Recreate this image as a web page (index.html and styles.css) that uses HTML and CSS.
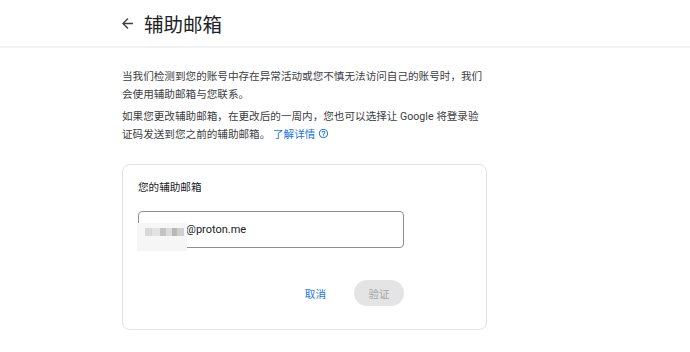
FILE: index.html
```html
<!DOCTYPE html>
<html lang="zh-CN">
<head>
    <meta charset="UTF-8">
    <meta name="viewport" content="width=device-width, initial-scale=1.0">
    <title>辅助邮箱</title>
    <link rel="stylesheet" href="styles.css">
</head>
<body>
    <div class="header">
        <a class="back" href="#">
            <svg viewBox="4 4 16 16" width="11" height="11"><path d="M20 11H7.83l5.59-5.59L12 4l-8 8 8 8 1.41-1.41L7.83 13H20v-2z" fill="#3c4043"/></svg>
        </a>
        <h1>辅助邮箱</h1>
    </div>

    <div class="main">
        <p>当我们检测到您的账号中存在异常活动或您不慎无法访问自己的账号时，我们会使用辅助邮箱与您联系。</p>
        <p>如果您更改辅助邮箱，在更改后的一周内，您也可以选择让 Google 将登录验证码发送到您之前的辅助邮箱。 <a class="link" href="#">了解详情</a><svg class="help" viewBox="0 0 24 24" width="11" height="11"><path fill="#1a73e8" d="M11 18h2v-2h-2v2zm1-16C6.48 2 2 6.48 2 12s4.48 10 10 10 10-4.48 10-10S17.52 2 12 2zm0 18c-4.41 0-8-3.590-8-8s3.59-8 8-8 8 3.59 8 8-3.59 8-8 8zm0-14c-2.21 0-4 1.79-4 4h2c0-1.1.9-2 2-2s2 .9 2 2c0 2-3 1.75-3 5h2c0-2.25 3-2.5 3-5 0-2.21-1.79-4-4-4z"/></svg></p>

        <div class="card">
            <div class="label">您的辅助邮箱</div>
            <div class="form">
                <div class="field">
                    @proton.me
                    <div class="blur">
                        <span class="px p1"></span><span class="px p2"></span><span class="px p3"></span><span class="px p4"></span><span class="px p5"></span><span class="px p6"></span>
                    </div>
                </div>
                <div class="actions">
                    <button class="cancel">取消</button>
                    <button class="verify" disabled>验证</button>
                </div>
            </div>
        </div>
    </div>
</body>
</html>
```

FILE: styles.css
```css
body {
    margin: 0;
    font-family: Roboto, "Noto Sans CJK SC", sans-serif;
    color: #3c4043;
    background-color: #ffffff;
}
.header {
    height: 46px;
    border-bottom: 2px solid #f1f1f1;
    display: flex;
    align-items: center;
    padding-left: 122px;
    gap: 11px;
}
.back {
    display: flex;
}
h1 {
    margin: 0;
    font-size: 19.5px;
    font-weight: 400;
    color: #202124;
}
.main {
    width: 365px;
    padding: 20px 0 0 122px;
}
p {
    margin: 0 0 4px;
    font-size: 10.6px;
    line-height: 18px;
}
.link {
    color: #1a73e8;
    text-decoration: none;
}
.help {
    vertical-align: -1px;
    margin-left: 3px;
}
.card {
    margin-top: 20px;
    border: 1px solid #e3e3e3;
    border-radius: 8px;
    padding: 14px 15px 23px;
}
.label {
    font-size: 10.6px;
    line-height: 18px;
    color: #202124;
}
.form {
    width: 266px;
    margin-top: 14px;
}
.field {
    position: relative;
    height: 35px;
    border: 1px solid #8f8f8f;
    border-radius: 4px;
    padding-left: 47px;
    font-size: 11px;
    line-height: 35px;
    color: #202124;
}
.blur {
    position: absolute;
    left: -2px;
    top: 11px;
    width: 50px;
    height: 28px;
    background-color: #f6f6f6;
    display: flex;
    align-items: flex-start;
    padding: 5px 0 0 8px;
    box-sizing: border-box;
}
.px {
    height: 8px;
    background-color: #d0d0d0;
}
.p1 { width: 7px; background-color: #d8d8d8; }
.p2 { width: 8px; background-color: #e2e2e2; }
.p3 { width: 6px; background-color: #c4c4c4; }
.p4 { width: 6px; background-color: #dcdcdc; }
.p5 { width: 5px; background-color: #b8b8b8; }
.p6 { width: 7px; background-color: #cfcfcf; }
.actions {
    display: flex;
    justify-content: flex-end;
    align-items: center;
    gap: 16px;
    margin-top: 32px;
}
button {
    font-family: Roboto, "Noto Sans CJK SC", sans-serif;
    font-size: 10.6px;
    border: none;
    height: 26px;
    padding: 0 12px;
    border-radius: 13px;
    background: none;
}
.cancel {
    color: #1a73e8;
}
.verify {
    width: 50px;
    background-color: #e4e4e4;
    color: #a6a6a6;
}
```
